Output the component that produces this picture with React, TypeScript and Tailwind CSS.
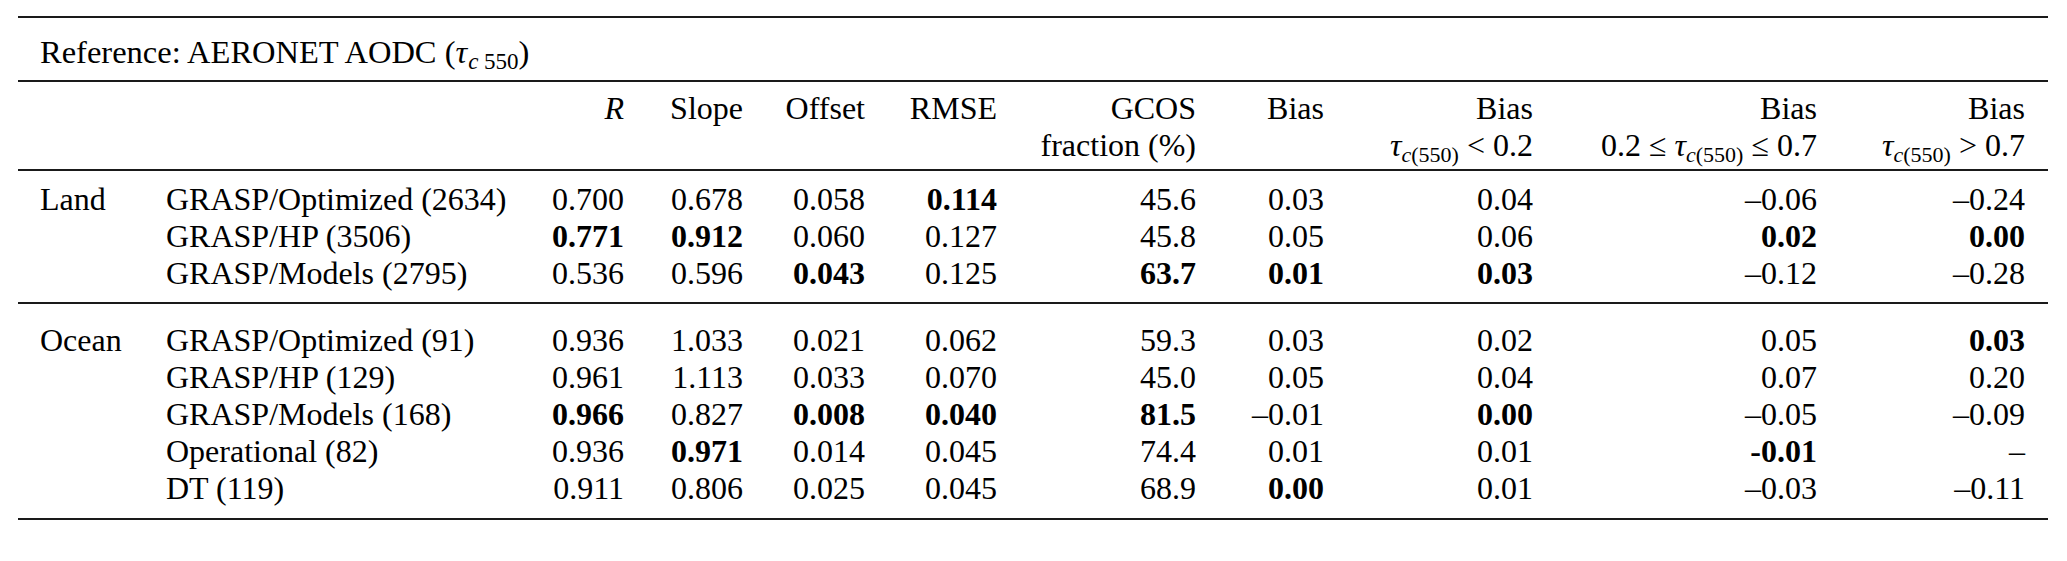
import React from "react";

type Cell = [string, boolean?];
type Row = { group?: string; name: string; cells: Cell[] };

// right-aligned numeric columns; the first two hold group + product names
const cols =
  "grid grid-cols-[126px_364px_94px_119px_122px_132px_199px_128px_209px_284px_208px]";

const land: Row[] = [
  {
    group: "Land",
    name: "GRASP/Optimized (2634)",
    cells: [["0.700"], ["0.678"], ["0.058"], ["0.114", true], ["45.6"], ["0.03"], ["0.04"], ["–0.06"], ["–0.24"]],
  },
  {
    name: "GRASP/HP (3506)",
    cells: [["0.771", true], ["0.912", true], ["0.060"], ["0.127"], ["45.8"], ["0.05"], ["0.06"], ["0.02", true], ["0.00", true]],
  },
  {
    name: "GRASP/Models (2795)",
    cells: [["0.536"], ["0.596"], ["0.043", true], ["0.125"], ["63.7", true], ["0.01", true], ["0.03", true], ["–0.12"], ["–0.28"]],
  },
];

const ocean: Row[] = [
  {
    group: "Ocean",
    name: "GRASP/Optimized (91)",
    cells: [["0.936"], ["1.033"], ["0.021"], ["0.062"], ["59.3"], ["0.03"], ["0.02"], ["0.05"], ["0.03", true]],
  },
  {
    name: "GRASP/HP (129)",
    cells: [["0.961"], ["1.113"], ["0.033"], ["0.070"], ["45.0"], ["0.05"], ["0.04"], ["0.07"], ["0.20"]],
  },
  {
    name: "GRASP/Models (168)",
    cells: [["0.966", true], ["0.827"], ["0.008", true], ["0.040", true], ["81.5", true], ["–0.01"], ["0.00", true], ["–0.05"], ["–0.09"]],
  },
  {
    name: "Operational (82)",
    cells: [["0.936"], ["0.971", true], ["0.014"], ["0.045"], ["74.4"], ["0.01"], ["0.01"], ["-0.01", true], ["–"]],
  },
  {
    name: "DT (119)",
    cells: [["0.911"], ["0.806"], ["0.025"], ["0.045"], ["68.9"], ["0.00", true], ["0.01"], ["–0.03"], ["–0.11"]],
  },
];

function Tau({ sub }: { sub: React.ReactNode }) {
  return (
    <span className="whitespace-nowrap">
      <i>τ</i>
      <sub className="text-[22px]">
        <i>c</i>
        {sub}
      </sub>
    </span>
  );
}

function Rule() {
  return <div className="border-t-2 border-[#1a1a1a]" />;
}

function DataRow({ row }: { row: Row }) {
  return (
    <div className={`${cols} h-[37px] items-center leading-[37px]`}>
      <div>{row.group ?? ""}</div>
      <div className="whitespace-nowrap">{row.name}</div>
      {row.cells.map(([v, bold], i) => (
        <div key={i} className={`text-right ${bold ? "font-bold" : ""}`}>
          {v}
        </div>
      ))}
    </div>
  );
}

export default function App() {
  return (
    <div className="min-h-screen bg-white text-black font-['Liberation_Serif','Times_New_Roman',serif] text-[32px] pt-[16px]">
      <div className="ml-[18px] w-[2030px]">
        <Rule />
        {/* ── Title ── */}
        <div className="pl-[22px] pt-[15px] pb-[9px] leading-[38px] text-[32.5px]">
          Reference: AERONET AODC (
          <span className="whitespace-nowrap">
            <i className="mr-[1px]">τ</i>
            <sub className="text-[23px]">
              <i>c</i> 550
            </sub>
          </span>
          )
        </div>
        <Rule />

        {/* ── Header ── */}
        <div className="pl-[22px] pt-[8px] pb-[5px]">
          <div className={`${cols} h-[37px] items-center leading-[37px]`}>
            <div />
            <div />
            <div className="text-right italic">R</div>
            <div className="text-right">Slope</div>
            <div className="text-right">Offset</div>
            <div className="text-right">RMSE</div>
            <div className="text-right">GCOS</div>
            <div className="text-right">Bias</div>
            <div className="text-right">Bias</div>
            <div className="text-right">Bias</div>
            <div className="text-right">Bias</div>
          </div>
          <div className={`${cols} h-[37px] items-center leading-[37px]`}>
            <div />
            <div />
            <div />
            <div />
            <div />
            <div />
            <div className="text-right whitespace-nowrap">fraction (%)</div>
            <div />
            <div className="text-right whitespace-nowrap">
              <Tau sub="(550)" /> &lt; 0.2
            </div>
            <div className="text-right whitespace-nowrap">
              0.2 ≤ <Tau sub="(550)" /> ≤ 0.7
            </div>
            <div className="text-right whitespace-nowrap">
              <Tau sub="(550)" /> &gt; 0.7
            </div>
          </div>
        </div>
        <Rule />

        {/* ── Land ── */}
        <div className="pl-[22px] pt-[10px] pb-[10px]">
          {land.map((r) => (
            <DataRow key={r.name} row={r} />
          ))}
        </div>
        <Rule />

        {/* ── Ocean ── */}
        <div className="pl-[22px] pt-[18px] pb-[11px]">
          {ocean.map((r) => (
            <DataRow key={r.name} row={r} />
          ))}
        </div>
        <Rule />
      </div>
    </div>
  );
}
